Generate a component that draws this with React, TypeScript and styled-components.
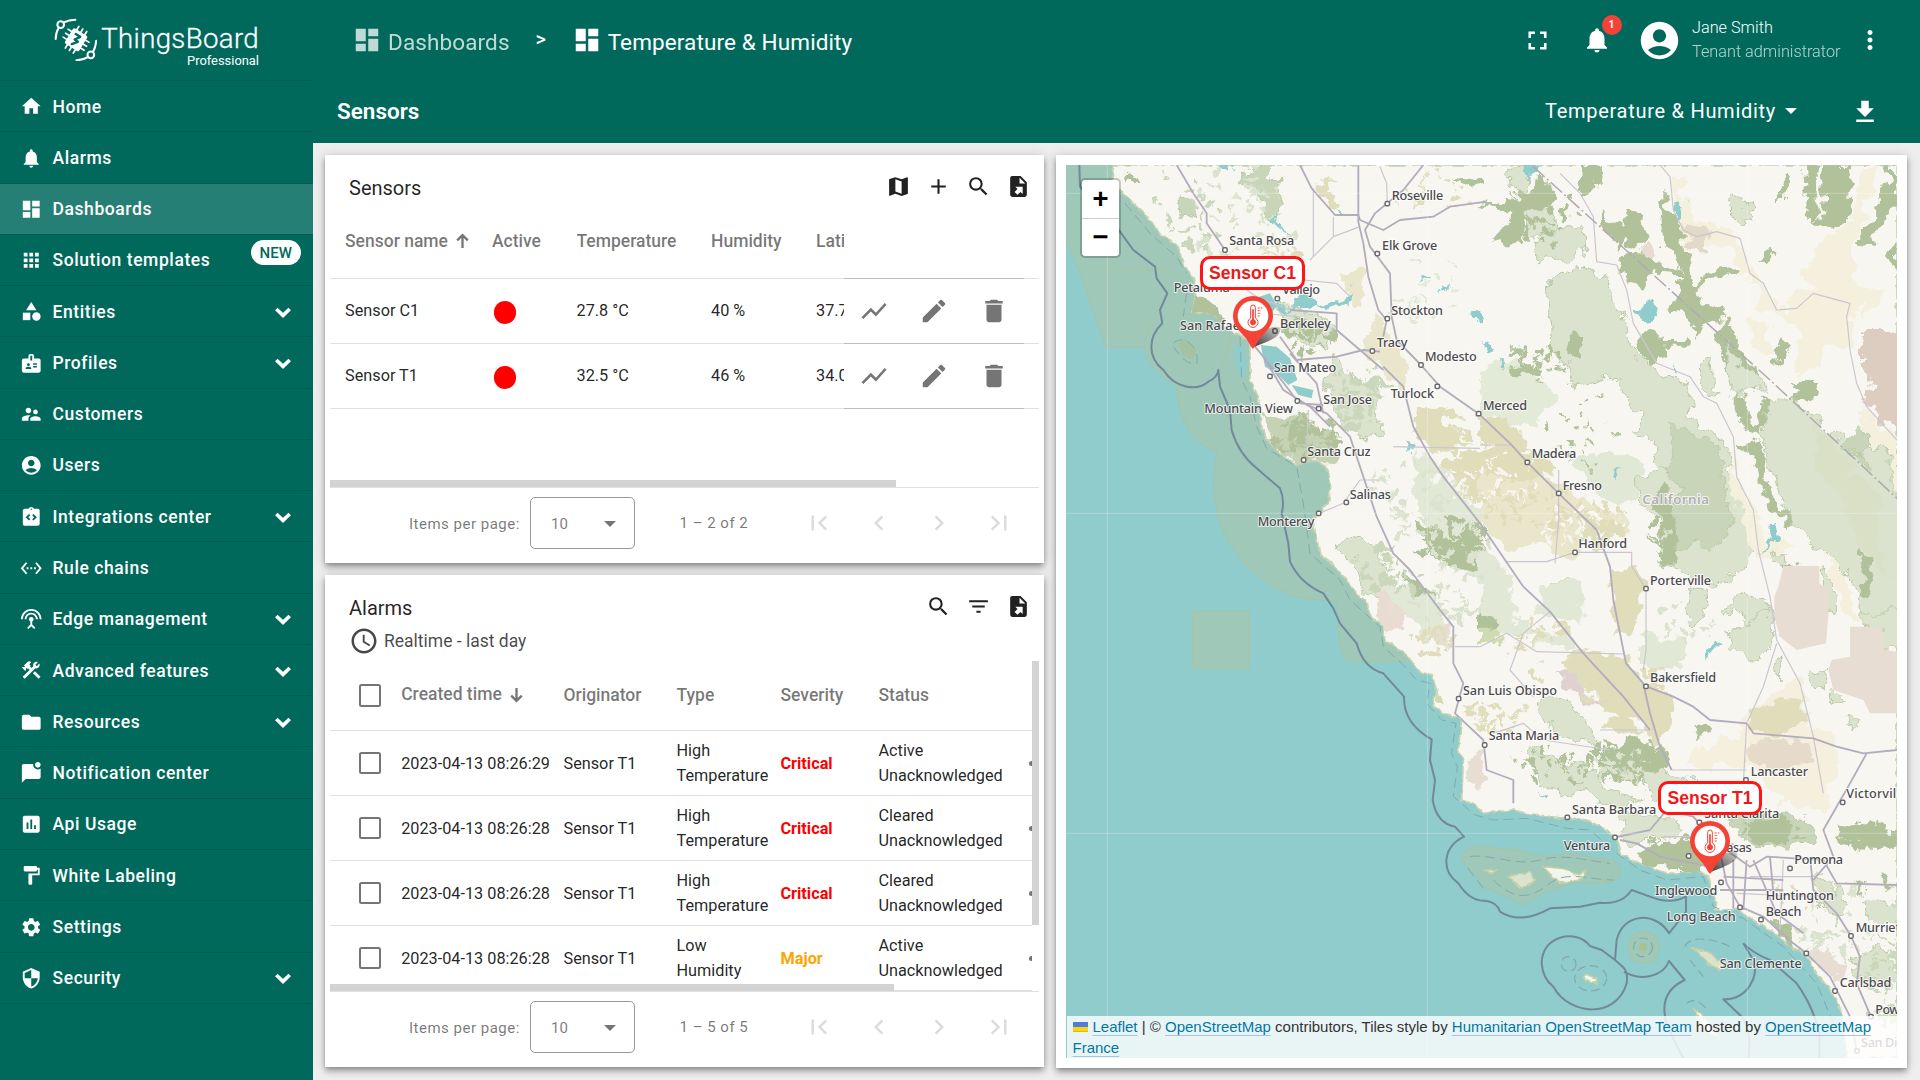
import React from "react";
import styled, { createGlobalStyle } from "styled-components";
import {
  MdHome, MdNotifications, MdDashboard, MdApps, MdCategory, MdBadge, MdSupervisorAccount,
  MdAccountCircle, MdIntegrationInstructions, MdSettingsEthernet, MdSettingsInputAntenna,
  MdConstruction, MdFolder, MdMarkChatUnread, MdInsertChart, MdFormatPaint, MdSettings,
  MdSecurity, MdFullscreen, MdMoreVert, MdFileDownload, MdMap, MdAdd, MdSearch, MdFilterList,
  MdAccessTime, MdShowChart, MdEdit, MdDelete, MdFirstPage,
  MdChevronLeft, MdChevronRight, MdLastPage,
} from "react-icons/md";

const GREEN = "#00695c";
const SOFT = "rgba(0,0,0,0.54)";
const DARK = "rgba(0,0,0,0.87)";

const GlobalStyle = createGlobalStyle`
  * { box-sizing: border-box; }
  body { margin: 0; font-family: Roboto, "Liberation Sans", sans-serif; overflow: hidden; }
  svg { display: block; flex: none; }
`;

const Shell = styled.div`
  width: 1920px;
  height: 1080px;
  display: flex;
  background: #eee;
`;

/* ---------- sidebar ---------- */

const Sidebar = styled.nav`
  width: 313px;
  flex: none;
  background: ${GREEN};
  color: #fff;
`;
const Brand = styled.div`
  height: 81px;
  padding: 17.5px 0 0 53.5px;
  display: flex;
  border-bottom: 1px solid #015c51;
`;
const BrandText = styled.div`
  width: 162px;
  margin-left: 0;
  padding-top: 5px;
  display: flex;
  flex-direction: column;
  align-items: flex-end;
`;
const BrandName = styled.div`
  font-size: 27.6px;
  font-weight: 300;
  line-height: 32px;
  letter-spacing: 0.35px;
  -webkit-text-stroke: 0.3px #fff;
  white-space: nowrap;
`;
const BrandEdition = styled.div`
  font-size: 12.9px;
  line-height: 14px;
  margin-top: -1px;
`;
const MenuItem = styled.div<{ $active?: boolean }>`
  position: relative;
  height: 51.27px;
  padding: 1px 19.5px 0 20px;
  display: flex;
  align-items: center;
  border-bottom: 1px solid #015c51;
  background: ${(p) => (p.$active ? "#267f74" : "transparent")};
  font-size: 17.5px;
  font-weight: 500;
  letter-spacing: 0.58px;
`;
const MenuLabel = styled.span`
  flex: 1;
  margin-left: 10px;
`;
const NewBadge = styled.span`
  position: absolute;
  right: 12.5px;
  top: 5.5px;
  width: 49.5px;
  height: 25px;
  border-radius: 13px;
  background: #fff;
  color: ${GREEN};
  font-size: 15px;
  letter-spacing: 0;
  line-height: 26px;
  text-align: center;
`;

/* ---------- header ---------- */

const Main = styled.main`
  flex: 1;
  display: flex;
  flex-direction: column;
  min-width: 0;
`;
const TopBar = styled.header`
  height: 80px;
  background: ${GREEN};
  color: #fff;
  display: flex;
  align-items: center;
  padding: 0 35px 0 39px;
`;
const Crumb = styled.div<{ $dim?: boolean }>`
  display: flex;
  align-items: center;
  gap: 6px;
  font-size: 22.5px;
  letter-spacing: 0.12px;
  opacity: ${(p) => (p.$dim ? 0.75 : 1)};
  font-weight: 400;
  white-space: nowrap;
  span { padding-top: 4px; }
`;
const CrumbSep = styled.span`
  width: 62px;
  text-align: center;
  font-size: 20px;
  font-weight: 500;
  padding-bottom: 2px;
`;
const Spacer = styled.div`
  flex: 1;
`;
const BellBox = styled.div`
  position: relative;
  margin: 0 25px 0 29.5px;
`;
const BellCount = styled.span`
  position: absolute;
  left: 19.5px;
  top: -10px;
  width: 20px;
  height: 20px;
  border-radius: 50%;
  background: #f44336;
  font-size: 10.5px;
  font-weight: 700;
  line-height: 19px;
  text-align: center;
`;
const UserInfo = styled.div`
  margin-left: 10px;
  width: 163px;
  font-size: 16.25px;
  font-weight: 300;
  line-height: 24px;
  white-space: nowrap;
`;
const UserRole = styled.div`
  opacity: 0.7;
`;
const ToolBar = styled.div`
  height: 63px;
  background: ${GREEN};
  color: #fff;
  display: flex;
  align-items: center;
  padding: 0 40px 0 24px;
`;
const StateName = styled.div`
  font-size: 22.5px;
  font-weight: 600;
  padding-bottom: 2px;
`;
const StatePicker = styled.div`
  display: flex;
  align-items: center;
  gap: 9px;
  font-size: 20px;
  letter-spacing: 0.72px;
  margin-right: 53px;
  padding-bottom: 2px;
`;
const Caret = styled.i<{ $color: string }>`
  width: 0;
  height: 0;
  border: 6.5px solid transparent;
  border-top-color: ${(p) => p.$color};
  border-bottom: 0;
`;

/* ---------- widgets ---------- */

const Board = styled.div`
  flex: 1;
  display: flex;
  gap: 12px;
  padding: 12px 13px 12px 12px;
  background: #eee;
`;
const Column = styled.div`
  width: 719px;
  display: flex;
  flex-direction: column;
  gap: 12px;
`;
const Card = styled.section<{ $h: number }>`
  height: ${(p) => p.$h}px;
  background: #fff;
  display: flex;
  flex-direction: column;
  padding: 0 5px;
  box-shadow: 0 2px 5px -1px rgba(0, 0, 0, 0.3), 0 5px 6px rgba(0, 0, 0, 0.18), 0 1px 12px rgba(0, 0, 0, 0.14);
`;
const CardHead = styled.div`
  display: flex;
  align-items: center;
  height: 51px;
  padding: 14px 8px 0 19px;
  gap: 15px;
  color: #212121;
  svg { margin-bottom: 2px; }
`;
const CardTitle = styled.h2`
  flex: 1;
  margin: 0;
  font-size: 20px;
  font-weight: 400;
  color: ${DARK};
`;
const TimeWindow = styled.div`
  display: flex;
  align-items: center;
  gap: 5px;
  height: 31px;
  padding: 0 0 2px 19px;
  font-size: 17.5px;
  color: rgba(0, 0, 0, 0.72);
`;
const TableArea = styled.div<{ $top?: number }>`
  flex: 1;
  display: flex;
  min-height: 0;
  margin-top: ${(p) => p.$top ?? 0}px;
  overflow: hidden;
`;
const TableBody = styled.div`
  flex: 1;
  min-width: 0;
  position: relative;
  overflow: hidden;
`;
const rowBase = `
  display: grid;
  align-items: center;
  border-bottom: 1px solid #e0e0e0;
`;
const SensorRow = styled.div<{ $head?: boolean }>`
  ${rowBase}
  grid-template-columns: 147px 84.5px 134.5px 105px 28px 180px;
  padding-left: 15px;
  height: ${(p) => (p.$head ? 73 : 65)}px;
  font-size: ${(p) => (p.$head ? 17.5 : 16.25)}px;
  font-weight: ${(p) => (p.$head ? 500 : 400)};
  color: ${(p) => (p.$head ? SOFT : DARK)};
`;
const AlarmRow = styled.div<{ $head?: boolean }>`
  ${rowBase}
  grid-template-columns: 42.7px 162.3px 113px 104px 98px 150.5px 5px;
  padding-left: 28.5px;
  height: ${(p) => (p.$head ? 70 : 65)}px;
  font-size: ${(p) => (p.$head ? 17.5 : 16.25)}px;
  font-weight: ${(p) => (p.$head ? 500 : 400)};
  line-height: 25px;
  color: ${(p) => (p.$head ? SOFT : DARK)};
`;
const Cell = styled.div`
  white-space: nowrap;
  overflow: hidden;
  display: flex;
  align-items: center;
  gap: 8px;
  padding-bottom: 1.5px;
`;
const Lines = styled.div`
  white-space: pre-line;
`;
const Severity = styled.div<{ $color: string }>`
  font-weight: 700;
  color: ${(p) => p.$color};
`;
const ActiveDot = styled.div`
  width: 22.5px;
  height: 22.5px;
  margin: 2.5px 0 0 1.5px;
  border-radius: 50%;
  background: #f00;
`;
const Actions = styled.div`
  height: 100%;
  display: flex;
  align-items: center;
  justify-content: space-around;
  box-shadow: 0 1px 0 #bdbdbd;
  color: #757575;
`;
const Checkbox = styled.div`
  width: 22.5px;
  height: 22.5px;
  border: 2px solid #757575;
  border-radius: 2.5px;
`;
const MoreDot = styled.div`
  width: 5px;
  height: 5px;
  border-radius: 50%;
  background: #757575;
`;
const HScroll = styled.div<{ $w: number }>`
  position: absolute;
  left: 0;
  bottom: 0;
  width: ${(p) => p.$w}px;
  height: 7px;
  background: #d3d3d3;
`;
const VScroll = styled.div<{ $h: number }>`
  width: 7px;
  height: ${(p) => p.$h}px;
  background: #d3d3d3;
`;
const Paginator = styled.div`
  height: 76px;
  flex: none;
  border-top: 1px solid #e0e0e0;
  display: flex;
  align-items: flex-start;
  padding: 9px 10px 0 79px;
  font-size: 15px;
  color: ${SOFT};
`;
const PageLabel = styled.span`
  width: 121px;
  line-height: 53px;
  padding-top: 1px;
  letter-spacing: 0.5px;
`;
const PageSelect = styled.div`
  width: 105px;
  height: 52px;
  border: 1px solid #9a9a9a;
  border-radius: 5px;
  display: flex;
  align-items: center;
  justify-content: space-between;
  padding: 1px 18.5px 0 20px;
`;
const PageRange = styled.span`
  width: 139px;
  padding-left: 44.5px;
  line-height: 52px;
  letter-spacing: 0.5px;
  white-space: nowrap;
`;
const PageButtons = styled.div`
  display: flex;
  height: 52px;
  align-items: center;
  gap: 30px;
  margin-left: 30px;
  color: #dcdcdc;
`;

/* ---------- map ---------- */

const MapCard = styled.section`
  flex: 1;
  height: 913px;
  background: #fff;
  padding: 10px;
  box-shadow: 0 2px 5px -1px rgba(0, 0, 0, 0.3), 0 5px 6px rgba(0, 0, 0, 0.18), 0 1px 12px rgba(0, 0, 0, 0.14);
`;
const MapFrame = styled.div`
  position: relative;
  width: 831px;
  height: 893px;
  overflow: hidden;
`;
const ZoomControl = styled.div`
  position: absolute;
  left: 14px;
  top: 13px;
  width: 41px;
  height: 80px;
  border: 2px solid rgba(0, 0, 0, 0.2);
  border-radius: 5px;
  background: #fff;
  background-clip: padding-box;
`;
const ZoomButton = styled.div`
  height: 38px;
  padding-top: 2px;
  display: flex;
  align-items: center;
  justify-content: center;
  color: #000;
  font: bold 27.5px "Liberation Mono", monospace;
  & + & { border-top: 1px solid #ccc; }
`;
const Attribution = styled.div`
  position: absolute;
  left: 1px;
  right: 0;
  bottom: 0;
  height: 42px;
  padding: 0 6px 0 5.5px;
  background: rgba(255, 255, 255, 0.8);
  font: 15px/21px "Liberation Sans", Arial, sans-serif;
  color: #333;
  a {
    color: #0078a8;
    text-decoration: underline;
    text-decoration-color: #a9c3e3;
    text-underline-offset: 3px;
    text-decoration-thickness: 1px;
  }
  svg { display: inline-block; margin-right: 5px; }
`;
const Pin = styled.div<{ $x: number; $y: number }>`
  position: absolute;
  left: ${(p) => p.$x}px;
  top: ${(p) => p.$y}px;
  width: 106px;
  display: flex;
  flex-direction: column;
  align-items: center;
  svg { margin-top: 5px; overflow: visible; }
`;
const PinLabel = styled.div`
  height: 34px;
  padding: 0 6.3px;
  border: 3px solid #ff1515;
  border-radius: 10px;
  background: #fff;
  color: #f01818;
  font: bold 17.6px/29px "Liberation Sans", Arial, sans-serif;
  white-space: nowrap;
`;
const Town = styled.text`
  font-family: "Noto Sans", "Open Sans", sans-serif;
  font-size: 38px;
  font-weight: 500;
  fill: #4b4a4d;
  stroke: rgba(255, 255, 255, 0.75);
  stroke-width: 6px;
  stroke-linejoin: round;
  paint-order: stroke;
`;
const Region = styled(Town)`
  font-size: 40px;
  font-weight: 600;
  fill: #b3adb5;
`;
const Highway = styled.path`
  fill: none;
  stroke: #b3acbd;
  stroke-width: 5.5px;
  stroke-linejoin: round;
`;
const MinorRoad = styled(Highway)`
  stroke: #cbc5cf;
  stroke-width: 3.5px;
`;
const SeaLimit = styled.path`
  fill: none;
  stroke: #71899a;
  stroke-width: 6px;
  stroke-linejoin: round;
`;
const InnerLimit = styled(SeaLimit)`
  stroke: #84aaa9;
  stroke-width: 3px;
  stroke-dasharray: 30 16;
`;

const LAND =
  "M190 45L185 100 230 140 285 190 335 255 385 290 400 345 430 385 440 420 425 490 460 485 500 500 520 530 560 550 600 575 600 690 625 740 632 820 650 870 690 910 740 945 765 935 810 935 835 965 842 1010 835 1060 808 1090 785 1110 795 1140 810 1215 850 1245 890 1290 915 1330 945 1350 960 1395 1000 1430 1005 1470 1070 1515 1110 1565 1145 1575 1160 1620 1150 1665 1190 1695 1235 1705 1225 1800 1240 1830 1235 1950 1275 1965 1300 1990 1390 1980 1430 1990 1500 2000 1550 2005 1610 2010 1660 2035 1700 2065 1715 2115 1780 2145 1850 2170 1950 2165 1975 2175 1985 2220 2000 2260 1995 2280 2020 2280 2060 2275 2110 2310 2180 2355 2220 2390 2270 2415 2300 2470 2340 2520 2365 2560 2380 2610 2390 2724H2541V45Z";

type Area = [string, string];

// Terrain of the north half: fill, outline
const NORTH: Area[] = [
  ["#e3ead8", "M1290 650L1400 630 1530 740 1440 835 1290 790Z"],
  ["#dfddba", "M1290 800L1380 810 1420 850 1440 900 1520 950 1450 1000 1380 1010 1290 960ZM1170 930L1290 890 1290 1060 1190 1010ZM1100 780L1200 770 1170 830 1260 880 1150 890 1090 850Z"],
  ["#e9e6cb", "M1290 960L1390 1000 1500 980 1620 1060 1740 1100 1740 1160 1620 1170 1560 1230 1460 1180 1370 1200 1290 1120ZM990 490L1020 560 1080 650 1060 720 1000 660 930 610ZM870 370L950 360 930 470 880 440Z"],
  ["#dfddba", "M1620 1110L1730 1110 1720 1160 1660 1180 1640 1220 1600 1180ZM1680 1260L1750 1250 1780 1300 1770 1380 1740 1450 1700 1450ZM1500 1290L1560 1290 1590 1320 1510 1320ZM800 90L860 95 840 130 870 160 850 180 800 130ZM700 300L760 320 740 360 700 340Z"],
  ["#e1e8d6", "M1100 900L1170 940 1290 1090 1290 1300 1240 1260 1150 1170 1090 1020ZM1560 930L1700 900 1780 950 1750 1060 1660 1060ZM1290 1180L1370 1260 1400 1400 1480 1450 1290 1450Z"],
  ["#c9d5b9", "M575 60L640 45 680 90 700 150 680 210 650 190 620 130 570 100ZM380 140L430 160 425 210 390 190Z"],
  ["#b1c29b", "M220 78L262 76 262 96 220 96ZM430 430L480 460 520 510 455 500 425 490ZM1100 1120L1170 1140 1200 1170 1280 1150 1300 1200 1270 1260 1180 1250 1130 1190ZM1060 1280L1110 1310 1150 1330 1130 1380 1080 1340ZM1215 80L1290 90 1290 120 1230 100Z"],
  ["#c5d2b3", "M650 800L720 790 790 820 850 850 870 910 840 940 750 930 690 900 650 850Z"],
  ["#dbe3cf", "M850 600L900 680 980 700 990 760 1000 860 930 860 860 790 820 720ZM890 1160L960 1180 1020 1290 1000 1340 940 1330 920 1250 860 1190ZM690 450L770 490 860 520 830 590 740 580 700 540Z"],
  ["#e8dcd2", "M980 1310L1040 1310 1070 1380 1060 1430 1010 1460 970 1390ZM1780 290L1800 275 1815 310 1790 340 1770 330Z"],
  // Sierra foothills
  ["#b1c29b", "M1290 150L1400 160 1410 110 1440 120 1460 90 1500 95 1515 150 1500 170 1460 175 1420 220 1420 270 1320 285 1360 235 1390 200ZM1590 45L1640 45 1645 110 1600 135 1580 120Z"],
  ["#dbe3cf", "M1430 180L1500 170 1520 235 1480 260 1430 255ZM1460 270L1530 235 1600 230 1610 290 1570 330 1490 320 1460 345ZM1370 50L1440 55 1430 120 1390 110Z"],
  ["#dbe3cf", "M1500 390L1580 355 1590 370 1600 350 1670 380 1680 440 1720 480 1735 560 1760 620 1830 670 1890 680 1925 740 1910 800 2000 860 2045 880 2030 950 2080 1010 2110 1120 2125 1200 2080 1250 1990 1310 1880 1260 1840 1240 1830 1120 1800 1080 1760 1050 1755 980 1830 960 1810 880 1760 850 1780 800 1730 760 1700 680 1570 710 1545 640 1495 590 1510 540 1490 480Z"],
  ["#c9d5b9", "M1850 820L1890 820 1910 850 2010 890 2015 1010 2050 1110 2010 1170 1980 1210 1950 1180 1880 1200 1870 1060 1895 1010 1840 950 1880 890Z"],
  ["#b1c29b", "M1550 560L1600 555 1590 630 1555 620ZM1850 1000L1810 1030 1830 1110 1860 1140 1840 1230 1880 1250 1875 1130ZM1390 580L1400 575 1400 620ZM1400 630L1475 650 1475 680 1430 670Z"],
  ["#b1c29b", "M1645 235L1665 185 1680 215 1725 225 1735 180 1770 200 1800 265 1760 290 1720 265 1715 300 1690 270 1650 245ZM1710 330L1740 295 1790 320 1810 350 1885 345 1890 370 1810 365 1780 430 1740 400 1730 370 1690 360Z"],
  ["#b1c29b", "M1840 125L1855 130 1855 190 1890 230 1900 280 1930 320 1920 360 1935 400 2000 360 2070 345 2060 370 1990 375 1935 420 1920 440 1970 465 2020 480 2025 510 1980 515 1955 530 1945 570 1930 520 1860 470 1880 440 1890 350 1870 300 1830 290 1840 200Z"],
  ["#b1c29b", "M2000 545L2040 495 2050 560 2080 620 2130 690 2120 735 2080 690 2060 620 2030 660 2010 600ZM2060 720L2090 730 2090 800 2120 830 2140 740 2160 740 2130 860 2100 850 2060 800ZM2080 880L2130 870 2150 930 2150 1000 2180 1060 2240 1130 2190 1110 2130 1020 2110 950Z"],
  ["#b1c29b", "M1780 560L1830 540 1850 570 1900 570 1910 550 1910 590 1850 590 1840 640 1790 640 1760 610ZM2210 60L2225 60 2210 110 2205 150 2180 150 2190 90ZM2265 45L2300 45 2300 160 2310 190 2300 220 2275 210 2270 130ZM2320 45L2400 45 2405 100 2400 230 2340 240 2300 220 2320 180 2310 110ZM2505 45L2541 45 2541 150 2500 220 2460 290 2425 280 2440 240 2475 190 2480 120 2520 100ZM2541 280L2541 355 2510 320ZM2135 330L2160 295 2175 320 2150 345Z"],
  ["#b1c29b", "M2160 610L2210 560 2230 575 2200 610 2180 640ZM2240 690L2310 690 2290 730 2240 770 2210 750 2260 730Z"],
  ["#dbe3cf", "M2020 150L2045 125 2065 155 2110 160 2110 190 2085 225 2060 200 2040 180ZM1960 640L1985 635 1990 690 2000 735 1970 740 1950 700ZM2020 570L2080 660 2150 700 2150 720 2040 720Z"],
  ["#f5f0dd", "M1860 60L1910 80 1900 130 1930 210 2060 245 2110 370 2160 420 2200 480 2240 420 2290 430 2260 350 2330 260 2400 240 2440 60 2480 50 2440 210 2400 330 2440 450 2400 520 2420 600 2320 590 2300 660 2230 670 2260 560 2200 490 2100 480 2130 420 2070 360 2040 290 1900 280ZM2430 410L2500 430 2440 500ZM2090 500L2150 520 2160 620 2110 600Z"],
  ["#e3d9c8", "M1890 225L1970 232 1968 305 1915 300 1920 270Z"],
  ["#dccdc0", "M2445 540L2581 540 2581 850 2490 820 2445 750 2445 720 2470 685 2445 690Z"],
  ["#f5f0dd", "M2050 890L2060 980 2110 1060 2150 1180 2200 1140 2230 1200 2150 1230 2100 1200 2080 1090 2030 1010ZM2330 1200L2380 1270 2430 1420 2390 1400 2350 1300ZM2440 780L2541 870 2541 1040 2450 940Z"],
  ["#dbe3cf", "M2160 740L2220 750 2290 800 2380 870 2520 910 2520 1010 2581 1070 2581 1450 2440 1450 2440 1330 2330 1210 2250 1150 2220 1110 2170 970 2135 860Z"],
  ["#dae0c6", "M2290 830L2350 860 2410 960 2500 1040 2480 1140 2520 1300 2480 1240 2420 1170 2380 1050 2300 960Z"],
  ["#c9d5b9", "M2370 885L2435 825 2470 880 2440 915ZM2400 910L2430 905 2460 960 2420 940Z"],
  ["#b1c29b", "M2440 1210L2470 1220 2460 1340 2435 1330ZM2190 1250L2230 1240 2250 1270 2220 1280Z"],
  ["#dbe3cf", "M1920 1310L1975 1320 1960 1390 1940 1430 1910 1400ZM2030 1370L2100 1330 2150 1340 2170 1420 2100 1430ZM2310 1230L2350 1300 2350 1400 2320 1390ZM2160 1200L2220 1230 2200 1260 2160 1240Z"],
];

// Terrain of the south half
const SOUTH: Area[] = [
  ["#e1e8d6", "M1450 1460L1560 1440 1590 1500 1440 1490ZM1770 1450L1910 1470 1890 1550 1810 1560 1770 1540ZM960 1290L1160 1350 1210 1500 1140 1460ZM1480 1300L1600 1290 1590 1420 1460 1390Z"],
  ["#dfddba", "M1530 1520L1600 1500 1730 1520 1780 1600 1880 1640 1860 1740 1810 1790 1780 1720 1660 1690 1640 1620 1560 1600ZM1660 1720L1720 1700 1780 1740 1700 1750Z"],
  ["#b1c29b", "M1290 1390L1340 1410 1350 1460 1290 1450ZM1930 1730L1980 1720 1990 1750 1940 1770ZM1660 1810L1760 1750 1780 1790 1850 1830 1820 1890 1750 1900 1690 1890 1640 1850ZM1420 1830L1470 1840 1530 1880 1500 1880Z"],
  ["#cfdbb0", "M1290 1430L1360 1450 1340 1485 1290 1485ZM1150 1640L1170 1620 1165 1670Z"],
  ["#dbe3cf", "M1460 1660L1510 1640 1580 1680 1640 1760 1640 1790 1560 1760 1500 1730ZM1410 1800L1460 1790 1530 1830 1640 1860 1680 1920 1780 1950 1700 1970 1590 1930 1540 1940 1480 1900 1470 1860ZM1770 1860L1930 1890 1910 1960 1830 1970 1790 1920Z"],
  ["#dbe3cf", "M2040 1440L2160 1380 2180 1480 2130 1530 2080 1530 2030 1480ZM2160 1540L2200 1530 2190 1580 2160 1570ZM2280 1570L2330 1560 2330 1620 2290 1600ZM2350 1620L2390 1650 2350 1660ZM2390 1690L2430 1710 2410 1740ZM2430 1380H2581V1500L2490 1500 2490 1440 2430 1430Z"],
  ["#e3d9c8", "M2095 1770L2190 1765 2295 1790 2295 1840 2180 1855 2090 1830Z"],
  ["#f5f0dd", "M2080 1700L2150 1640 2250 1580 2270 1640 2270 1730 2350 1740 2370 1860 2330 1920 2330 1980 2200 1960 2100 1850 1900 1850 1940 1790 2080 1760Z"],
  ["#dfddba", "M2100 1680L2200 1640 2260 1650 2260 1720 2180 1760 2100 1740Z"],
  ["#e6dbca", "M2095 1770L2190 1765 2295 1790 2295 1840 2180 1855 2090 1830Z"],
  ["#c9d5b9", "M2040 1990L2170 1990 2260 2000 2300 2060 2260 2080 2140 2090 2060 2050Z"],
  ["#b1c29b", "M2100 2010L2200 2020 2230 2060 2180 2080 2110 2060ZM1770 2110L1830 2080 1920 2070 1980 2110 1970 2160 1860 2160 1780 2140ZM2350 2020L2430 2030 2581 2040 2581 2090 2450 2090 2380 2060Z"],
  ["#dbe3cf", "M1720 1990L1850 2000 1900 2030 1840 2070 1750 2080 1710 2060ZM2290 2180L2350 2200 2390 2260 2360 2320 2310 2260ZM2440 2260L2541 2250 2541 2330 2460 2310ZM2400 2420L2500 2400 2541 2440 2541 2500 2430 2490Z"],
  ["#b1c29b", "M2160 2310L2220 2330 2230 2390 2200 2370ZM2420 2200L2450 2190 2440 2250ZM2490 2170L2520 2180 2510 2220Z"],
  ["#e8ddd2", "M2270 2400L2340 2410 2390 2440 2370 2500 2330 2480ZM1160 1430L1200 1440 1190 1480 1160 1470ZM1240 1850L1290 1800 1300 1900 1250 1910ZM990 1340L1060 1390 1070 1400 1030 1395Z"],
  ["#e0d0d0", "M1500 1555L1570 1580 1610 1630 1650 1650 1680 1660 1600 1660 1560 1610Z"],
];

// Restricted zones have surveyed, straight borders
const ZONES =
  "M2200 1248H2308L2308 1300 2335 1320 2335 1400 2328 1480 2240 1500 2190 1460 2173 1400 2173 1340 2185 1310ZM2400 1430L2495 1430 2500 1500 2541 1505 2541 1690 2460 1690 2440 1650 2350 1620 2335 1560 2345 1530 2400 1520Z";

const LAKES =
  "M1870 150L1885 140 1897 150 1897 210 1890 228 1875 205ZM1415 45H1470L1465 75 1430 78ZM1745 485L1780 465 1800 455 1825 480 1810 510 1785 512 1760 498ZM500 45L550 45 545 75 520 60ZM670 190L690 220 710 265 680 230ZM1060 880L1090 880 1080 910 1060 905ZM1300 570L1320 560 1330 610 1305 620ZM1350 630L1360 620 1370 670 1355 660ZM1875 635L1890 660 1880 665ZM2145 1130L2175 1130 2180 1170 2135 1210 2165 1165ZM860 175L880 180 875 195ZM1180 410L1200 400 1180 430ZM1260 470L1290 490 1290 520 1265 500ZM1970 1490L1985 1465 2010 1480 1985 1490 1975 1510ZM1460 1930L1500 1940 1480 1945ZM1695 970L1715 960 1700 990ZM1100 385L1130 388 1110 397Z";
const BAY =
  "M615 445L660 430 680 465 660 500 640 490 625 470ZM632 585L680 590 720 625 742 690 715 705 680 670 645 650ZM725 705L790 720 785 745 745 735Z";
const DELTA =
  "M680 462L720 470 760 440 800 455 790 470 740 475 700 480ZM780 470L850 462 895 430 905 405 892 465 830 480Z";

const HIGHWAYS = [
  "M750 45L785 115 855 195H925L930 210 1000 240 1050 210 1150 200 1200 170 1310 155",
  "M925 45V215L940 280 955 380 985 480 1010 510 1000 560",
  "M1120 45L1060 120 975 190 945 240 960 290 1020 370 1025 500 1040 570 1113 645 1170 710 1286 791 1380 880 1432 937 1526 1030 1640 1140 1680 1250 1690 1350 1710 1450 1728 1540 1780 1600 1800 1690 1830 1790 1865 1860",
  "M1000 650L1060 710 1090 830 1140 920 1180 980 1290 1120 1420 1310 1500 1385 1600 1510 1720 1640 1800 1740",
  "M380 45L430 130 470 190 470 220 525 300",
  "M590 560L640 620 740 750 830 790 900 860 930 950 980 1100 1030 1210 1080 1260 1170 1380 1210 1430 1210 1540 1240 1600 1215 1690 1300 1770 1310 1860 1390 1890 1390 1960",
  "M690 560L740 630 860 620 940 600 990 605M720 480L860 490 860 540 930 600 1000 660",
  "M1788 1609L1870 1640 1930 1670 1980 1710 2090 1720 2110 1750 2290 1765 2360 1790 2440 1810 2541 1800",
  "M2450 1810L2400 1900 2320 2040 2350 2120 2290 2190",
  "M1695 2062L1800 2040 1850 1980 1930 2000 2000 2080 2100 2150 2150 2120 2320 2130 2360 2200 2541 2205",
  "M1710 2070L1760 2080 1830 2120 1980 2150 2050 2080M2013 2120L2030 2200 2070 2270 2140 2300 2230 2380 2269 2410 2340 2480 2400 2600 2420 2700",
  "M2050 2130V2290M2090 2130L2080 2280M2110 2130L2180 2290 2260 2350M2010 2220H2200M2020 2180L2200 2190M2160 2120L2170 2230M2280 2120L2290 2220 2360 2290 2403 2358 2430 2420 2420 2500 2463 2600",
  "M640 620L700 720 780 770 840 830M720 610L800 700 820 790M750 760L820 765",
];
const MINOR = [
  "M790 115V320M850 200V260L780 330M850 260L930 230M860 540L740 500 640 490M990 50L1010 100 1012 161M1030 890L1290 895M1290 885H1380M1526 960V1110L1515 1240M1370 1235H1490L1575 1207H1745V1250L1788 1316V1500L1780 1560",
  "M1830 45L1860 80 1870 180 1900 240 1940 260 2000 245 2070 265 2100 370 2140 400 2180 480 2240 475 2290 430 2400 460 2390 500 2400 600 2420 700 2450 770 2541 870",
  "M1530 70L1590 130 1630 200 1640 335 1700 345 1730 420 1750 520 1820 640 1920 680 1960 740 2000 760 2050 860 2060 980 2110 1080 2125 1200 2160 1340 2180 1470 2250 1600 2290 1760 2320 1930",
  "M2180 1480L2140 1610 2090 1720 2080 1900M1290 1490L1370 1450 1460 1505 1720 1512M1215 1490H1290M1865 1860L2090 1860M1650 1740L1800 1740M1380 1560L1450 1640M525 300L560 400 620 440 720 480M760 390L860 400 900 440M985 990L930 990 880 1060 808 1090M775 780L770 900",
  "M1500 1385L1420 1450 1380 1560M1680 1800L1480 1770 1420 1720 1330 1750M1840 2060L1930 2060 2000 2110M2100 2180L2300 2180M2200 2130L2190 2340M2060 2230L2290 2240",
];

const TOWNS: [string, number, number, number][] = [
  ["Roseville", 1025, 150, 155], ["Santa Rosa", 538, 285, 195], ["Elk Grove", 996, 299, 166],
  ["Petaluma", 371, 425, 168], ["Vallejo", 697, 432, 113], ["Stockton", 1024, 495, 155],
  ["Berkeley", 690, 533, 152], ["San Rafael", 390, 539, 190], ["Tracy", 980, 590, 92],
  ["Modesto", 1125, 633, 155], ["San Mateo", 671, 666, 188], ["Turlock", 1022, 744, 130],
  ["San Jose", 820, 763, 146], ["Mountain View", 463, 789, 266], ["Merced", 1299, 779, 132],
  ["Santa Cruz", 772, 918, 190], ["Madera", 1445, 924, 134], ["Fresno", 1538, 1019, 118],
  ["Salinas", 899, 1047, 124], ["Monterey", 623, 1129, 170], ["Hanford", 1585, 1195, 146],
  ["Porterville", 1800, 1305, 183], ["Bakersfield", 1800, 1595, 198],
  ["San Luis Obispo", 1239, 1634, 282], ["Santa Maria", 1316, 1771, 212],
  ["Lancaster", 2102, 1878, 172], ["Victorville", 2389, 1944, 182],
  ["Santa Barbara", 1566, 1992, 253], ["Santa Clarita", 1963, 2004, 225],
  ["Ventura", 1541, 2100, 140], ["Calabasas", 1935, 2107, 170], ["Pomona", 2233, 2143, 146],
  ["Inglewood", 1815, 2236, 187], ["Huntington", 2147, 2249, 205], ["Beach", 2147, 2299, 107],
  ["Long Beach", 1850, 2313, 207], ["Murrieta", 2417, 2347, 155],
  ["San Clemente", 2009, 2453, 246], ["Carlsbad", 2369, 2511, 155], ["Poway", 2476, 2591, 110],
  ["San Diego", 2433, 2690, 175],
];
const STOPS: [number, number][] = [
  [1012, 161], [525, 300], [982, 311], [682, 446], [1012, 506], [675, 543], [967, 603],
  [1113, 645], [660, 679], [1162, 709], [806, 776], [742, 753], [1286, 791], [761, 930],
  [1432, 937], [1526, 1030], [889, 1057], [806, 1090], [1575, 1207], [1788, 1316],
  [1788, 1609], [1226, 1646], [1304, 1785], [2088, 1890], [2378, 1957], [1552, 2002],
  [1948, 2017], [1695, 2062], [1916, 2118], [2220, 2155], [2013, 2197], [2133, 2309],
  [2070, 2272], [2403, 2358], [2269, 2410], [2355, 2523], [2463, 2600], [2421, 2703],
];

// Small patches of scrub: centre, spread, count, patch size, colour
const SCRUB: [number, number, number, number, number, number, string][] = [
  [380, 200, 130, 130, 34, 9, "#cbd7bb"], [560, 200, 160, 160, 40, 9, "#dbe3cf"],
  [640, 330, 110, 90, 22, 8, "#dfddba"], [760, 860, 110, 60, 80, 8, "#b1c29b"],
  [770, 560, 90, 50, 24, 9, "#b1c29b"], [900, 720, 90, 120, 34, 10, "#cbd7bb"],
  [1050, 1060, 120, 130, 34, 9, "#dbe3cf"], [1190, 1180, 110, 70, 34, 10, "#b1c29b"],
  [1000, 1260, 110, 80, 30, 10, "#cbd7bb"], [1400, 1050, 130, 90, 50, 8, "#dfddba"],
  [1600, 1110, 120, 70, 50, 8, "#dfddba"], [1450, 200, 120, 90, 40, 9, "#b1c29b"],
  [1440, 640, 100, 60, 24, 8, "#b1c29b"], [1820, 1130, 40, 110, 30, 8, "#b1c29b"],
  [1190, 1360, 120, 60, 26, 9, "#dbe3cf"], [1120, 1480, 80, 50, 18, 8, "#dfddba"],
  [1330, 1690, 90, 70, 22, 8, "#dfddba"], [1700, 1830, 140, 60, 46, 10, "#b1c29b"],
  [1480, 1850, 110, 60, 22, 8, "#b1c29b"], [1700, 1600, 130, 80, 44, 8, "#dfddba"],
  [1860, 2110, 110, 45, 30, 9, "#b1c29b"], [2150, 2040, 100, 35, 22, 9, "#b1c29b"],
  [2440, 2060, 90, 40, 30, 10, "#b1c29b"], [2360, 2330, 130, 130, 46, 8, "#dbe3cf"],
  [2480, 2480, 60, 160, 34, 8, "#cbd7bb"], [2250, 2220, 120, 60, 22, 6, "#dfddba"],
  [1480, 1480, 120, 110, 24, 8, "#dfddba"], [1900, 1420, 90, 70, 18, 7, "#dbe3cf"],
  [1120, 130, 150, 60, 22, 7, "#dfddba"], [1100, 420, 110, 120, 22, 7, "#e1e8d6"],
  [1180, 840, 80, 70, 24, 9, "#dfddba"], [1600, 850, 130, 120, 22, 6, "#b1c29b"],
  [1300, 980, 180, 100, 50, 7, "#f7f6f1"], [1230, 1220, 120, 70, 30, 7, "#dbe3cf"],
  [1580, 1130, 140, 80, 40, 7, "#f7f6f1"], [1720, 1850, 120, 50, 30, 7, "#dbe3cf"],
];

function scrubPath(index: number): string {
  const [cx, cy, rx, ry, n, size] = SCRUB[index];
  let seed = index * 7919 + 17;
  const rnd = () => {
    seed = (seed * 16807 + 11) % 2147483647;
    return seed / 2147483647;
  };
  let d = "";
  for (let i = 0; i < n; i++) {
    const a = rnd() * Math.PI * 2;
    const r = Math.sqrt(rnd());
    const x = cx + Math.cos(a) * r * rx;
    const y = cy + Math.sin(a) * r * ry;
    const w = size * (0.6 + rnd() * 2);
    const h = size * (0.5 + rnd() * 1.4);
    d += `M${x.toFixed(0)} ${y.toFixed(0)}l${w.toFixed(0)} ${(-h).toFixed(0)} ${(w * 0.7).toFixed(0)} ${h.toFixed(0)} ${(-w * 0.5).toFixed(0)} ${h.toFixed(0)}z`;
  }
  return d;
}

// Territorial waters along the coast and round the islands
const COAST_LIMIT =
  "M88 45L90 110 205 238 250 300 315 350 320 385 352 430 330 480 337 520C295 560 290 620 340 660C375 715 440 725 475 695Q503 682 505 660L510 710 540 780 545 840Q565 910 620 955L690 1015Q705 1050 695 1090L715 1180 720 1235Q750 1300 820 1330L850 1375 870 1420 920 1480Q940 1555 1000 1570L1062 1640Q1060 1720 1145 1768L1140 1830 1155 1890 1148 1950Q1160 2020 1215 2030L1242 2060C1180 2090 1170 2160 1225 2200Q1260 2255 1305 2252Q1340 2255 1350 2285Q1410 2325 1500 2275L1590 2270 1650 2258Q1715 2265 1745 2220L1800 2240Q1860 2265 1908 2240V2285L1857 2350C1820 2285 1720 2285 1700 2370L1695 2430L1655 2400 1620 2388C1580 2335 1475 2355 1475 2440Q1478 2485 1510 2510C1560 2600 1700 2605 1730 2500Q1735 2465 1718 2450L1695 2430";
const SOUTH_LIMIT =
  "M1722 2465C1770 2495 1840 2480 1857 2433L1904 2490C1840 2520 1835 2570 1850 2620Q1870 2670 1900 2724M2080 2380L2110 2430C2130 2480 2090 2550 2020 2548L2080 2605Q2105 2650 2095 2724M2080 2380Q2110 2410 2160 2430L2240 2500Q2290 2570 2308 2650V2724";

const MapDrawing = () => (
  <svg width="831" height="893" viewBox="48 45 2493 2679">
    <defs>
      <clipPath id="land"><path d={LAND} /></clipPath>
      <filter id="rough" x="0" y="0" width="100%" height="100%">
        <feTurbulence type="fractalNoise" baseFrequency="0.022" numOctaves="4" seed="4" />
        <feDisplacementMap in="SourceGraphic" scale="60" xChannelSelector="R" yChannelSelector="G" />
      </filter>
      <filter id="shore" x="0" y="0" width="100%" height="100%">
        <feTurbulence type="fractalNoise" baseFrequency="0.05" numOctaves="2" seed="9" />
        <feDisplacementMap in="SourceGraphic" scale="14" xChannelSelector="R" yChannelSelector="G" />
      </filter>
    </defs>
    <rect x="48" y="45" width="2493" height="2679" fill="#90cccb" />
    <g fill="#9fc8b9" stroke="#a6c4a5" strokeWidth="3">
      <path d="M40 30H700L1140 1535H895L875 1510 865 1440 860 1355 760 1345C640 1320 520 1200 500 1080L490 1000 500 905C420 880 385 800 380 710C330 670 285 640 285 592H170L85 355 40 250Z" />
      <path d="M427 1384H598V1556H427Z" />
      <path d="M1235 2130C1240 2080 1300 2085 1330 2095L1400 2100 1480 2120 1560 2110 1690 2130C1725 2160 1715 2200 1660 2200L1560 2200 1480 2230 1420 2265 1370 2240 1300 2210Z" />
      <rect x="1735" y="2345" width="92" height="94" rx="40" />
    </g>
    <path d="M554 585H580L590 650 575 690 558 650Z" fill="#90cccb" />
    <g fill="none" stroke="#a9c3a2" strokeWidth="3">
      <path d="M85 360H360L400 400M282 592C290 540 320 500 345 492H425M510 655L545 570" />
    </g>
    <path d="M385 580L405 565 440 600 430 630 400 620Z" fill="#a5c3a3" />
    <g filter="url(#shore)">
      <path d={LAND} fill="#f7f6f1" stroke="#c8d3b3" strokeWidth="5" />
      <g fill="#f3f4ea" stroke="#c3cfa6" strokeWidth="5">
        <path d="M1375 2180L1440 2165 1460 2190 1415 2215Z" fill="#dbe3cf" />
        <path d="M1482 2150L1540 2155 1580 2175 1610 2165 1600 2185 1530 2200 1500 2175Z" />
        <path d="M1300 2160L1345 2160 1320 2170ZM1930 2395L1975 2405 2000 2430 2030 2440 2010 2460 1975 2440Z" fill="#dbe3cf" />
        <path d="M1600 2470L1640 2485 1640 2500 1605 2490ZM1930 2575L1960 2600 2010 2665 1960 2640Z" />
      </g>
    </g>
    <g clipPath="url(#land)">
      <g filter="url(#rough)">
        {NORTH.concat(SOUTH).map(([fill, d], i) => (
          <path key={i} d={d} fill={fill} stroke={fill === "#dbe3cf" || fill === "#c9d5b9" ? "#b9c9a4" : "none"} strokeWidth="3" />
        ))}
        {SCRUB.map((s, i) => (
          <path key={i} d={scrubPath(i)} fill={s[6]} />
        ))}
        <path d={LAKES} fill="#90cccb" />
        <path d={DELTA} fill="#90cccb" />
      </g>
      <path d={ZONES} fill="#e7ddd2" />
      <path d={BAY} fill="#90cccb" />
      {MINOR.map((d, i) => <MinorRoad key={i} d={d} />)}
      {HIGHWAYS.map((d, i) => <Highway key={i} d={d} />)}
      <path d="M1450 50L2160 690 2541 1045" fill="none" stroke="#b1a9b0" strokeWidth="4.5" strokeDasharray="46 9 6 9" />
    </g>
    <SeaLimit d={COAST_LIMIT} />
    <SeaLimit d={SOUTH_LIMIT} />
    <InnerLimit d="M225 160L300 250 380 320 410 370M410 430L400 500M570 560L575 690 600 740 620 830 650 895 740 950 760 1060 780 1210 870 1290 900 1350 990 1430 1000 1490 1060 1545 1100 1590 1140 1600 1130 1660 1175 1710 1218 1720 1205 1810 1222 1850 1210 1940 1275 1995 1330 2010 1430 2005 1550 2035 1620 2040 1700 2110 1770 2160 1850 2190 1960 2180 1990 2270 2080 2305 2200 2390 2300 2500 2350 2620" />
    <InnerLimit d="M1260 2120C1320 2110 1400 2150 1470 2130S1600 2130 1680 2140M1330 2190C1400 2260 1450 2240 1500 2200S1620 2190 1690 2190M1300 2215L1250 2150M370 580C400 550 450 590 440 640Q410 650 370 590" />
    <g fill="none" stroke="#84a9a8" strokeWidth="3.5" strokeDasharray="26 14">
      <circle cx="1779" cy="2392" r="28" />
      <circle cx="1556" cy="2442" r="22" />
      <ellipse cx="1622" cy="2485" rx="48" ry="38" />
      <path d="M1905 2390C1920 2350 2000 2370 2040 2390M1920 2430L1960 2480M1910 2560C1930 2540 1960 2560 1970 2580" />
    </g>
    <circle cx="1779" cy="2392" r="12" fill="#a9c191" />
    <g stroke="#ffffff" strokeOpacity="0.28" strokeWidth="3">
      <path d="M172 45V2724M1132 45V2724M2092 45V2724M48 130H2541M48 1090H2541M48 2050H2541" />
    </g>
    {STOPS.map(([x, y]) => (
      <rect key={`${x}-${y}`} x={x - 6.5} y={y - 6.5} width="13" height="13" rx="4" fill="#fff" stroke="#6b6a6e" strokeWidth="4.5" />
    ))}
    {TOWNS.map(([name, x, y, w]) => (
      <Town key={name} x={x} y={y} textLength={w}>{name}</Town>
    ))}
    <Region x="1777" y="1062" textLength={200}>California</Region>
  </svg>
);

const SensorPin = ({ name, x, y }: { name: string; x: number; y: number }) => (
  <Pin $x={x} $y={y}>
    <PinLabel>{name}</PinLabel>
    <svg width="42" height="54" viewBox="-63 -63 126 162">
      <defs>
        <linearGradient id="shade" x1="0" y1="1" x2="1" y2="0">
          <stop offset="0" stopColor="#000" stopOpacity="0.75" />
          <stop offset="1" stopColor="#000" stopOpacity="0.15" />
        </linearGradient>
      </defs>
      <path d="M5 92C15 55 45 25 80 34 90 60 50 75 5 92Z" fill="url(#shade)" />
      <path d="M0 98C-7 94-12 78-22 66-40 46-60 28-60 0A60 60 0 0 1 60 0C60 28 40 46 22 66 12 78 7 94 0 98Z" fill="#f44336" />
      <circle r="46" fill="#fff" />
      <g fill="none" stroke="#f44336" strokeWidth="3">
        <path d="M-7 6V-26A7 7 0 0 1 7-26V6A15 15 0 1 1-7 6Z" />
        <path d="M14-24H28M14-16H24M14-8H24M14 0H20" strokeDasharray="6 3" />
      </g>
      <path d="M-2.5-20H2.5V10A9 9 0 1 1-2.5 10Z" fill="#f44336" />
    </svg>
  </Pin>
);

/* ---------- small drawings ---------- */

const Logo = () => (
  <svg width="43.5" height="43.5" viewBox="22 22 130 130" fill="none" stroke="#fff" strokeWidth="6" strokeLinecap="round">
    <circle cx="42" cy="42" r="10" />
    <path d="M51 35Q66 27 86 27M36 51Q27 66 27 85" />
    <circle cx="132" cy="132" r="10" />
    <path d="M139 123Q147 108 148 90M123 139Q108 148 89 148" />
    <g transform="translate(88 87) rotate(32)">
      <rect x="-25" y="-27" width="50" height="54" rx="5" fill="#fff" stroke="none" />
      <path d="M-14-38V38M0-38V38M14-38V38M-37-14H37M-37 0H37M-37 14H37" strokeWidth="5" />
      <path d="M-10-14L6-14-4 2 8 2-4 18" stroke={GREEN} strokeWidth="7" strokeLinejoin="round" />
    </g>
  </svg>
);

const MenuChevron = () => (
  <svg width="22" height="22" viewBox="0 0 22 22" fill="none" stroke="#fff" strokeWidth="3.6">
    <path d="M4.3 8L11 14.4 17.7 8" />
  </svg>
);

const SortArrow = ({ down }: { down?: boolean }) => (
  <svg width="13" height="16" viewBox="0 0 13 16" fill="none" stroke="#757575" strokeWidth="2.3">
    <path d={down ? "M6.5 1V14M1.2 8.6L6.5 13.9 11.8 8.6" : "M6.5 15V2M1.2 7.4L6.5 2.1 11.8 7.4"} />
  </svg>
);

const FileExport = () => (
  <svg width="25" height="25" viewBox="0 0 24 24" fill="currentColor">
    <path d="M6,2C4.89,2 4,2.9 4,4V20A2,2 0 0,0 6,22H18A2,2 0 0,0 20,20V8L14,2M13,3.5L18.5,9H13M8.93,12.22H16V19.29L13.88,17.17L11.05,20L8.22,17.17L11.05,14.35" />
  </svg>
);

/* ---------- data ---------- */

const MENU: { label: string; Icon: React.ComponentType<{ size?: number }>; open?: boolean; active?: boolean; isNew?: boolean }[] = [
  { label: "Home", Icon: MdHome },
  { label: "Alarms", Icon: MdNotifications },
  { label: "Dashboards", Icon: MdDashboard, active: true },
  { label: "Solution templates", Icon: MdApps, isNew: true },
  { label: "Entities", Icon: MdCategory, open: true },
  { label: "Profiles", Icon: MdBadge, open: true },
  { label: "Customers", Icon: MdSupervisorAccount },
  { label: "Users", Icon: MdAccountCircle },
  { label: "Integrations center", Icon: MdIntegrationInstructions, open: true },
  { label: "Rule chains", Icon: MdSettingsEthernet },
  { label: "Edge management", Icon: MdSettingsInputAntenna, open: true },
  { label: "Advanced features", Icon: MdConstruction, open: true },
  { label: "Resources", Icon: MdFolder, open: true },
  { label: "Notification center", Icon: MdMarkChatUnread },
  { label: "Api Usage", Icon: MdInsertChart },
  { label: "White Labeling", Icon: MdFormatPaint },
  { label: "Settings", Icon: MdSettings },
  { label: "Security", Icon: MdSecurity, open: true },
];

const SENSORS = [
  { name: "Sensor C1", temperature: "27.8 °C", humidity: "40 %", latitude: "37.77" },
  { name: "Sensor T1", temperature: "32.5 °C", humidity: "46 %", latitude: "34.00" },
];

const ALARMS = [
  { time: "2023-04-13 08:26:29", type: "High\nTemperature", severity: "Critical", status: "Active\nUnacknowledged" },
  { time: "2023-04-13 08:26:28", type: "High\nTemperature", severity: "Critical", status: "Cleared\nUnacknowledged" },
  { time: "2023-04-13 08:26:28", type: "High\nTemperature", severity: "Critical", status: "Cleared\nUnacknowledged" },
  { time: "2023-04-13 08:26:28", type: "Low\nHumidity", severity: "Major", status: "Active\nUnacknowledged" },
];

const Pager = ({ range }: { range: string }) => (
  <Paginator>
    <PageLabel>Items per page:</PageLabel>
    <PageSelect>10<Caret $color="#757575" /></PageSelect>
    <PageRange>{range}</PageRange>
    <PageButtons>
      <MdFirstPage size={30} />
      <MdChevronLeft size={30} />
      <MdChevronRight size={30} />
      <MdLastPage size={30} />
    </PageButtons>
  </Paginator>
);

export default function App() {
  return (
    <Shell>
      <GlobalStyle />
      <Sidebar>
        <Brand>
          <Logo />
          <BrandText>
            <BrandName>ThingsBoard</BrandName>
            <BrandEdition>Professional</BrandEdition>
          </BrandText>
        </Brand>
        {MENU.map(({ label, Icon, open, active, isNew }) => (
          <MenuItem key={label} $active={active}>
            <Icon size={22.5} />
            <MenuLabel>{label}</MenuLabel>
            {isNew && <NewBadge>NEW</NewBadge>}
            {open && <MenuChevron />}
          </MenuItem>
        ))}
      </Sidebar>
      <Main>
        <TopBar>
          <Crumb $dim><MdDashboard size={30} /><span>Dashboards</span></Crumb>
          <CrumbSep>&gt;</CrumbSep>
          <Crumb><MdDashboard size={30} /><span>Temperature &amp; Humidity</span></Crumb>
          <Spacer />
          <MdFullscreen size={31} />
          <BellBox>
            <MdNotifications size={30} />
            <BellCount>1</BellCount>
          </BellBox>
          <MdAccountCircle size={45} />
          <UserInfo>
            <div>Jane Smith</div>
            <UserRole>Tenant administrator</UserRole>
          </UserInfo>
          <MdMoreVert size={30} />
        </TopBar>
        <ToolBar>
          <StateName>Sensors</StateName>
          <Spacer />
          <StatePicker>Temperature &amp; Humidity<Caret $color="#fff" /></StatePicker>
          <MdFileDownload size={30} />
        </ToolBar>
        <Board>
          <Column>
            <Card $h={408}>
              <CardHead>
                <CardTitle>Sensors</CardTitle>
                <MdMap size={25} />
                <MdAdd size={25} />
                <MdSearch size={25} />
                <FileExport />
              </CardHead>
              <TableArea>
                <TableBody>
                  <SensorRow $head>
                    <Cell>Sensor name <SortArrow /></Cell>
                    <Cell>Active</Cell>
                    <Cell>Temperature</Cell>
                    <Cell>Humidity</Cell>
                    <Cell>Latitude</Cell>
                    <Actions />
                  </SensorRow>
                  {SENSORS.map((s) => (
                    <SensorRow key={s.name}>
                      <Cell>{s.name}</Cell>
                      <ActiveDot />
                      <Cell>{s.temperature}</Cell>
                      <Cell>{s.humidity}</Cell>
                      <Cell>{s.latitude}</Cell>
                      <Actions>
                        <MdShowChart size={30} />
                        <MdEdit size={30} />
                        <MdDelete size={30} />
                      </Actions>
                    </SensorRow>
                  ))}
                  <HScroll $w={566} />
                </TableBody>
              </TableArea>
              <Pager range="1 – 2 of 2" />
            </Card>
            <Card $h={492}>
              <CardHead>
                <CardTitle>Alarms</CardTitle>
                <MdSearch size={25} />
                <MdFilterList size={25} />
                <FileExport />
              </CardHead>
              <TimeWindow><MdAccessTime size={30} />Realtime - last day</TimeWindow>
              <TableArea $top={4}>
                <TableBody>
                  <AlarmRow $head>
                    <Checkbox />
                    <Cell>Created time <SortArrow down /></Cell>
                    <div>Originator</div>
                    <div>Type</div>
                    <div>Severity</div>
                    <div>Status</div>
                  </AlarmRow>
                  {ALARMS.map((a, i) => (
                    <AlarmRow key={i}>
                      <Checkbox />
                      <div>{a.time}</div>
                      <div>Sensor T1</div>
                      <Lines>{a.type}</Lines>
                      <Severity $color={a.severity === "Major" ? "#ffa500" : "#f00"}>{a.severity}</Severity>
                      <Lines>{a.status}</Lines>
                      <MoreDot />
                    </AlarmRow>
                  ))}
                  <HScroll $w={564} />
                </TableBody>
                <VScroll $h={264} />
              </TableArea>
              <Pager range="1 – 5 of 5" />
            </Card>
          </Column>
          <MapCard>
            <MapFrame>
              <MapDrawing />
              <SensorPin name="Sensor C1" x={133.5} y={91} />
              <SensorPin name="Sensor T1" x={591} y={616} />
              <ZoomControl>
                <ZoomButton>+</ZoomButton>
                <ZoomButton>−</ZoomButton>
              </ZoomControl>
              <Attribution>
                <a>
                  <svg width="15" height="10" viewBox="0 0 12 8">
                    <path fill="#4C7BE1" d="M0 0h12v4H0z" />
                    <path fill="#FFD500" d="M0 4h12v3H0z" />
                    <path fill="#E0BC00" d="M0 7h12v1H0z" />
                  </svg>
                  Leaflet
                </a>{" "}
                | © <a>OpenStreetMap</a> contributors, Tiles style by{" "}
                <a>Humanitarian OpenStreetMap Team</a> hosted by <a>OpenStreetMap France</a>
              </Attribution>
            </MapFrame>
          </MapCard>
        </Board>
      </Main>
    </Shell>
  );
}
